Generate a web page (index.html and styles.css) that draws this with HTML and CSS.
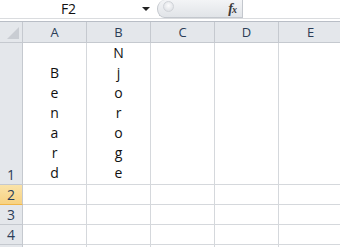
FILE: index.html
```html
<!DOCTYPE html>
<html>
<head>
<meta charset="utf-8">
<link rel="stylesheet" href="styles.css">
</head>
<body>
<div class="app">
  <div class="fbar">
    <div class="namebox">F2</div>
    <div class="drop"><span class="tri"></span></div>
    <div class="pill">
      <span class="grip"></span>
      <span class="fx">f<sub>x</sub></span>
    </div>
    <div class="input"></div>
  </div>
  <div class="gap"></div>
  <div class="sheet">
    <div class="hd corner"><span class="cornertri"></span></div>
    <div class="hd col">A</div>
    <div class="hd col">B</div>
    <div class="hd col">C</div>
    <div class="hd col">D</div>
    <div class="hd col">E</div>

    <div class="hd row">1</div>
    <div class="cell vert"><span>B</span><span>e</span><span>n</span><span>a</span><span>r</span><span>d</span></div>
    <div class="cell vert"><span>N</span><span>j</span><span>o</span><span>r</span><span>o</span><span>g</span><span>e</span></div>
    <div class="cell"></div>
    <div class="cell"></div>
    <div class="cell"></div>

    <div class="hd row sel">2</div>
    <div class="cell"></div><div class="cell"></div><div class="cell"></div><div class="cell"></div><div class="cell"></div>

    <div class="hd row">3</div>
    <div class="cell"></div><div class="cell"></div><div class="cell"></div><div class="cell"></div><div class="cell"></div>

    <div class="hd row">4</div>
    <div class="cell"></div><div class="cell"></div><div class="cell"></div><div class="cell"></div><div class="cell"></div>

    <div class="hd row"></div>
    <div class="cell"></div><div class="cell"></div><div class="cell"></div><div class="cell"></div><div class="cell"></div>
  </div>
</div>
</body>
</html>
```
FILE: styles.css
```css
html, body {
  margin: 0;
  padding: 0;
  background: #ffffff;
}
.app {
  width: 340px;
  height: 247px;
  overflow: hidden;
  font-family: "Open Sans", "Liberation Sans", sans-serif;
}
.fbar {
  display: flex;
  height: 19px;
  box-sizing: border-box;
  border-bottom: 1px solid #dadcdf;
  background: #ffffff;
}
.namebox {
  width: 137px;
  text-align: center;
  font-size: 14px;
  line-height: 18px;
  color: #111111;
}
.drop {
  width: 20px;
  display: flex;
  align-items: center;
  justify-content: center;
}
.tri {
  width: 0;
  height: 0;
  border-left: 4px solid transparent;
  border-right: 4px solid transparent;
  border-top: 4px solid #222222;
  margin-left: -3px;
  margin-top: -1px;
}
.pill {
  width: 86px;
  height: 18px;
  box-sizing: border-box;
  display: flex;
  align-items: center;
  justify-content: space-between;
  padding: 0 6px 0 5px;
  border: 1px solid #c3c7cd;
  border-top: none;
  border-top-left-radius: 10px 12px;
  border-bottom-left-radius: 10px 12px;
  background: linear-gradient(#f3f4f6, #e1e4e8);
}
.grip {
  width: 9px;
  height: 9px;
  border-radius: 50%;
  background: radial-gradient(circle at 50% 40%, #fbfbfc, #d8dbe0);
  border: 1px solid #d0d3d8;
  margin-top: -4px;
}
.fx {
  font-family: "Liberation Serif", "DejaVu Serif", serif;
  font-style: italic;
  font-weight: bold;
  font-size: 14px;
  color: #3a3a3a;
  letter-spacing: -1px;
}
.fx sub {
  font-size: 10px;
  vertical-align: 0;
}
.input {
  flex: 1;
}
.gap {
  height: 3px;
  box-sizing: border-box;
  border-bottom: 1px solid #b9bec6;
  background: #ffffff;
}
.sheet {
  display: grid;
  grid-template-columns: 23px repeat(5, 64px);
  grid-template-rows: 21px 142px 20px 20px 20px 20px;
}
.sheet > div {
  box-sizing: border-box;
  border-right: 1px solid #d5d8dc;
  border-bottom: 1px solid #d5d8dc;
}
.hd {
  background: #e4e7eb;
  color: #2c3e57;
  font-size: 13px;
  border-right-color: #c5c9cf !important;
  border-bottom-color: #c5c9cf !important;
}
.col {
  display: flex;
  align-items: center;
  justify-content: center;
}
.row {
  display: flex;
  align-items: flex-end;
  justify-content: center;
  line-height: 19px;
  font-size: 14px;
}
.row.sel {
  background: linear-gradient(#fae3a9, #f7d282);
  border-bottom-color: #f0b64a !important;
  color: #2c3e57;
}
.corner {
  position: relative;
}
.cornertri {
  position: absolute;
  right: 3px;
  bottom: 3px;
  width: 0;
  height: 0;
  border-left: 12px solid transparent;
  border-bottom: 12px solid #c9cdd3;
}
.cell {
  background: #ffffff;
}
.vert {
  display: flex;
  flex-direction: column;
  align-items: center;
  justify-content: flex-end;
  font-size: 14px;
  line-height: 20px;
  color: #111111;
  padding-bottom: 1px;
}
```
